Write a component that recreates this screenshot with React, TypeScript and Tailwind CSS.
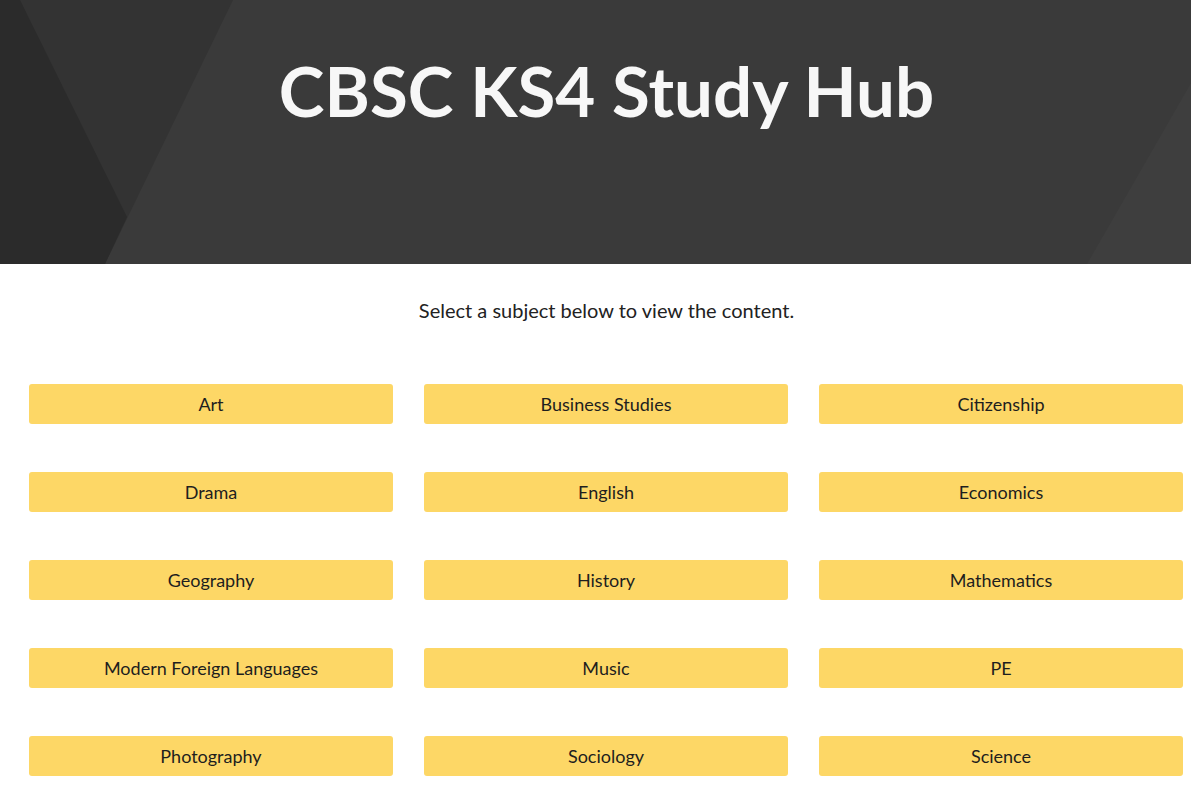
const subjects = [
  "Art",
  "Business Studies",
  "Citizenship",
  "Drama",
  "English",
  "Economics",
  "Geography",
  "History",
  "Mathematics",
  "Modern Foreign Languages",
  "Music",
  "PE",
  "Photography",
  "Sociology",
  "Science",
];

function HeaderShapes() {
  return (
    <svg className="absolute inset-0 w-full h-full" viewBox="0 0 1191 264" preserveAspectRatio="none">
      <rect width="1191" height="264" fill="#3a3a3a" />
      <polygon points="20,0 233,0 105,264 0,264 0,0" fill="#333333" />
      <polygon points="0,0 20,0 127,217 105,264 0,264" fill="#2b2b2b" />
      <polygon points="1191,83 1191,264 1087,264" fill="#3e3e3e" />
    </svg>
  );
}

export default function App() {
  return (
    <div className="min-h-screen bg-white" style={{ fontFamily: "Lato, 'Open Sans', sans-serif" }}>
      <header className="relative h-[264px] overflow-hidden">
        <HeaderShapes />
        <h1 className="relative z-10 pt-[56px] pl-[22px] text-center text-[69px] leading-none font-bold text-[#f7f7f7]">
          CBSC KS4 Study Hub
        </h1>
      </header>

      <p className="mt-[34px] pl-[22px] text-center text-[20px] leading-[24px] text-[#222]">
        Select a subject below to view the content.
      </p>

      <div className="mt-[62px] pl-[29px] pr-[8px] grid grid-cols-3 gap-x-[31px] gap-y-[48px] pb-10">
        {subjects.map((s) => (
          <a key={s} href="#"
            className="h-[40px] flex items-center justify-center rounded-[3px] bg-[#fdd766] text-[18px] text-[#1e1e1e]"
          >
            {s}
          </a>
        ))}
      </div>
    </div>
  );
}
